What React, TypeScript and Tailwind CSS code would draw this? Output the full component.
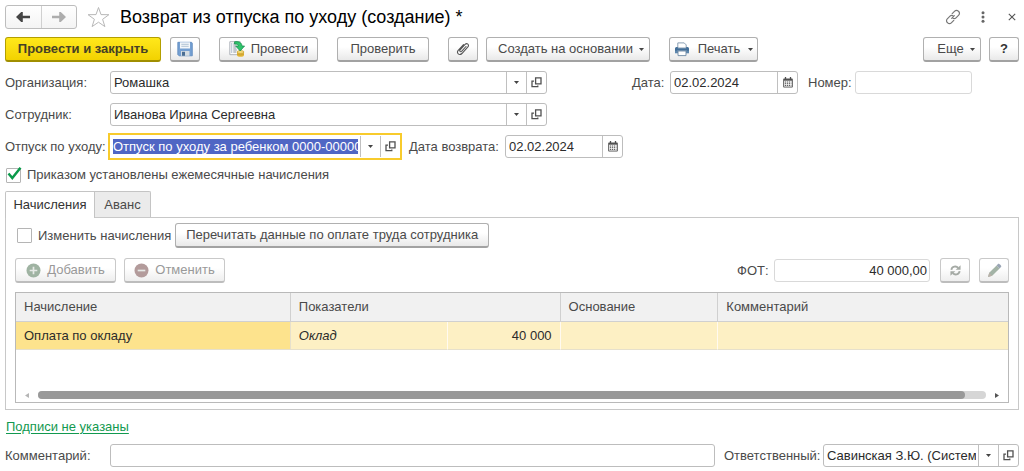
import { useState } from "react";
import type { ReactNode } from "react";

const buttonBase =
  "flex h-[25px] shrink-0 items-center justify-center rounded-[3px] border border-[#b0b0b0] border-b-2 border-b-[#a2a2a2] bg-linear-to-b from-white from-40% to-[#e9e9e9] whitespace-nowrap";

const disabledBase =
  "flex h-[25px] shrink-0 items-center justify-center rounded-[3px] border border-[#c9c9c9] border-b-2 border-b-[#bdbdbd] bg-linear-to-b from-white from-40% to-[#eeeeee] text-[#999] whitespace-nowrap";

const inputBase = "min-w-0 flex-1 bg-transparent text-[#2b2b2b] outline-none";

function Caret() {
  return (
    <svg width="5" height="3" viewBox="0 0 5 3" className="shrink-0" aria-hidden="true">
      <path d="M0 0h5L2.500 3z" fill="#444" />
    </svg>
  );
}

function OpenIcon() {
  return (
    <svg width="11" height="11" viewBox="0 0 11 11" fill="none" stroke="#505050" strokeWidth="1.3" aria-hidden="true">
      <path d="M4.600 .9h5.400v5.900H4.600z" />
      <path d="M3 4.200H1v5.500h5.800V8.400" />
    </svg>
  );
}

function CalendarIcon() {
  return (
    <svg width="10" height="11" viewBox="0 0 10 11" aria-hidden="true">
      <path d="M1 1.500h8a.8.8 0 0 1 .8.8v7.400a.8.8 0 0 1-.8.8H1a.8.8 0 0 1-.8-.8V2.300A.8.8 0 0 1 1 1.500z" fill="#505050" />
      <path d="M2.500 0v2M7.500 0v2" stroke="#505050" strokeWidth="1.300" />
      <path d="M1.100 3.700h7.800v5.900H1.100z" fill="#fff" />
      <path d="M1.800 5h6.600M1.800 6.700h6.600M1.800 8.400h6.600" stroke="#505050" strokeWidth="1" strokeDasharray="1.300 .7" />
    </svg>
  );
}

function SaveIcon() {
  return (
    <svg width="16" height="16" viewBox="0 0 16 16" aria-hidden="true">
      <path d="M.8 1.300h13.700l.8.8v12.700H2L.8 13.600z" fill="#75a0d2" stroke="#5a88bd" strokeWidth=".8" />
      <path d="M3 1.300h10v6.200H3z" fill="#f4f7fa" />
      <path d="M4.300 3.300h7.400M4.300 5.300h7.400" stroke="#a9bccf" strokeWidth=".9" />
      <path d="M4 10h8.500v4.800H4z" fill="#d5dde3" />
      <path d="M5 10.800h3v4H5z" fill="#4a6e94" />
    </svg>
  );
}

function PostIcon() {
  return (
    <svg width="16" height="16" viewBox="0 0 16 16" aria-hidden="true">
      <path d="M.8.7h10.400v13H.8z" fill="#fafafa" stroke="#a7adb3" strokeWidth=".9" />
      <path d="M4.300 3h3M4.300 5h3M4.300 7h3M4.300 9h3.500M4.300 11h3" stroke="#7e8b99" strokeWidth=".9" />
      <path d="M2.200 3h1M2.200 5h1M2.200 7h1M2.200 9h1M2.200 11h1" stroke="#5f7fa4" strokeWidth=".9" />
      <path d="M8 11v3.300c0 2 7 2 7 0V11z" fill="#e5b93a" />
      <ellipse cx="11.500" cy="11" rx="3.500" ry="1.400" fill="#f8df7f" stroke="#bd942a" strokeWidth=".6" />
      <path d="M8 12.900c1 1.400 6 1.400 7 0" fill="none" stroke="#bd942a" strokeWidth=".7" />
      <path d="M5.500.8c4-.8 7.400.8 7.500 4.200h2.600l-4.400 5L6.700 5h2.700c0-1.500-1.700-2.300-3.900-2z" fill="#2fc36b" stroke="#14884a" strokeWidth=".7" />
    </svg>
  );
}

function ClipIcon() {
  return (
    <svg width="14" height="14" viewBox="0 0 14 14" fill="none" stroke="#555" strokeWidth="1.100" strokeLinecap="round" aria-hidden="true">
      <path d="M10 4.500 5.600 9.300c-1 1-2.500-.2-1.500-1.400l5-5.500c1.800-1.800 4.600.4 2.800 2.500l-6 6.600c-2.500 2.400-6-.5-3.700-3.200L7.500 2.700" />
    </svg>
  );
}

function PrinterIcon() {
  return (
    <svg width="16" height="15" viewBox="0 0 16 15" aria-hidden="true">
      <path d="M3.800 .9h6.400l2 2V6H3.800z" fill="#fff" stroke="#7e95ab" strokeWidth=".9" />
      <path d="M2.500 5h1.300v1.300h8.400V5h1.300a1.500 1.500 0 0 1 1.500 1.500V11h-2.300V8.700H3.300V11H1V6.500A1.500 1.500 0 0 1 2.500 5z" fill="#426e98" />
      <path d="M1 8.700h14v2.600H1z" fill="#5d87ad" />
      <path d="M4 9h8v4.600H4z" fill="#fff" stroke="#6d89a3" strokeWidth=".9" />
    </svg>
  );
}

function LinkIcon() {
  return (
    <svg width="16" height="16" viewBox="0 0 16 16" fill="none" stroke="#777" strokeWidth="1.200" strokeLinecap="round" aria-hidden="true">
      <path d="M7.200 4.600 9.700 2.100a2.500 2.500 0 0 1 3.600 0l.4.400a2.500 2.500 0 0 1 0 3.600L11 8.800a2.500 2.500 0 0 1-3 .4" />
      <path d="M8.800 11.400l-2.500 2.500a2.500 2.500 0 0 1-3.600 0l-.4-.4a2.500 2.500 0 0 1 0-3.600L5 7.200a2.500 2.500 0 0 1 3-.4" />
      <path d="M6.700 9.300l2.600-2.600" />
    </svg>
  );
}

function ArrowIcon({ back = false }: { back?: boolean }) {
  return (
    <svg width="14" height="10" viewBox="0 0 14 10" fill={back ? "#454545" : "#adadad"} aria-hidden="true">
      <path d={back ? "M0 5 5.200 0h1.600v3.800H14v2.400H6.800V10H5.200z" : "M14 5 8.800 0H7.200v3.800H0v2.400h7.200V10h1.600z"} />
    </svg>
  );
}

function RoundIcon({ minus = false }: { minus?: boolean }) {
  return (
    <svg width="15" height="15" viewBox="0 0 15 15" aria-hidden="true">
      <circle cx="7.500" cy="7.500" r="7" fill={minus ? "#b39b9b" : "#9fb3a2"} />
      <path d={minus ? "M3.700 7.500h7.600" : "M3.700 7.500h7.600M7.500 3.700v7.600"} stroke="#e6e9e6" strokeWidth="1.700" />
    </svg>
  );
}

function RefreshIcon() {
  return (
    <svg width="11" height="11" viewBox="0 0 12 12" fill="none" stroke="#a5aaa5" strokeWidth="2" aria-hidden="true">
      <path d="M1.500 5.200C2 1.400 6.800.6 8.900 3.200" />
      <path d="M10.500 6.800C10 10.600 5.200 11.400 3.100 8.800" />
      <path d="M11.500.3v5H6.200z" fill="#a5aaa5" stroke="none" />
      <path d="M.5 11.700v-5h5.300z" fill="#a5aaa5" stroke="none" />
    </svg>
  );
}

function PencilIcon() {
  return (
    <svg width="15" height="15" viewBox="0 0 15 15" aria-hidden="true">
      <path d="M1 14l1.200-4.200L9.600 2.400l3 3-7.400 7.400z" fill="#a3b3a6" />
      <path d="M9.600 2.400 11.200.8c.8-.8 3.800 2.200 3 3l-1.600 1.600z" fill="#9aa5b5" />
      <path d="M1 14l1.200-4.200 3 3z" fill="#b9b0a8" />
    </svg>
  );
}

function SideButton({ label, children }: { label: string; children: ReactNode }) {
  return (
    <button type="button" aria-label={label} className="flex w-5 shrink-0 items-center justify-center self-stretch border-l border-[#c0c0c0]">
      {children}
    </button>
  );
}

type FieldProps = { id: string; value: string; kind: "pick" | "date"; className: string };

function Field({ id, value, kind, className }: FieldProps) {
  return (
    <div className={`flex h-[23px] items-center rounded-[3px] border border-[#bdbdbd] bg-white pl-[3px] ${className}`}>
      <input id={id} type="text" defaultValue={value} className={inputBase} />
      {kind === "pick" ? (
        <>
          <span className="w-[2px] shrink-0" />
          <SideButton label="Выбрать"><Caret /></SideButton>
          <SideButton label="Открыть"><OpenIcon /></SideButton>
        </>
      ) : (
        <SideButton label="Календарь"><CalendarIcon /></SideButton>
      )}
    </div>
  );
}

type CheckProps = { id: string; label: string; initial: boolean };

function Check({ id, label, initial }: CheckProps) {
  const [on, setOn] = useState(initial);
  return (
    <div className="flex items-center gap-[6px]">
      <span className="relative flex">
        <input
          id={id}
          type="checkbox"
          checked={on}
          onChange={(e) => setOn(e.target.checked)}
          className="size-[15px] appearance-none rounded-[1px] border border-[#b5b5b5] bg-white"
        />
        {on && (
          <svg className="pointer-events-none absolute -top-px left-px" width="15" height="14" viewBox="0 0 15 14" fill="none" aria-hidden="true">
            <path d="M1.500 6.500 5.300 11 13.500.8" stroke="#0a9a4a" strokeWidth="2.500" />
          </svg>
        )}
      </span>
      <label htmlFor={id} className="whitespace-nowrap">{label}</label>
    </div>
  );
}

export default function App() {
  return (
    <main className="bg-white px-[5px] pt-[5px] pb-1 font-['Liberation_Sans',Arial,sans-serif] text-[13px] leading-4 text-[#4a4a4a]">
      <header className="flex h-6 items-center">
        <div className="flex h-6 w-[72px] rounded-[3px] border border-[#bdbdbd] bg-linear-to-b from-white to-[#f4f4f4]">
          <button type="button" aria-label="Назад" className="flex flex-1 items-center justify-center border-r border-[#d0d0d0]">
            <ArrowIcon back />
          </button>
          <button type="button" aria-label="Вперед" className="flex flex-1 items-center justify-center">
            <ArrowIcon />
          </button>
        </div>
        <button type="button" aria-label="В избранное" className="ml-[10px]">
          <svg width="23" height="22" viewBox="0 0 23 22" fill="none" stroke="#b8b8b8" strokeWidth="1" aria-hidden="true">
            <path d="M11.500 1.500 14 8.600l7.900.1-6.300 4.600 2.300 7.300-6.400-4.400-6.400 4.400 2.300-7.300L1.100 8.700 9 8.600z" />
          </svg>
        </button>
        <h1 className="ml-[10px] text-[18px] leading-6 text-black">Возврат из отпуска по уходу (создание) *</h1>
        <div className="ml-auto flex items-center pr-[3px]">
          <button type="button" aria-label="Ссылка"><LinkIcon /></button>
          <button type="button" aria-label="Меню" className="ml-5">
            <svg width="4" height="12" viewBox="0 0 4 12" fill="#666" aria-hidden="true">
              <circle cx="2" cy="1.700" r="1.500" /><circle cx="2" cy="6" r="1.500" /><circle cx="2" cy="10.300" r="1.500" />
            </svg>
          </button>
          <button type="button" aria-label="Закрыть" className="ml-[23px]">
            <svg width="8" height="8" viewBox="0 0 8 8" stroke="#555" strokeWidth="1.100" aria-hidden="true"><path d="M.8.800l6.400 6.400M7.200.800.8 7.200" /></svg>
          </button>
        </div>
      </header>

      <div className="mt-2 flex items-center">
        <button type="button" className="flex h-[25px] w-[156px] items-center justify-center rounded-[3px] border border-[#b39f00] border-b-2 border-b-[#a08e00] bg-linear-to-b from-[#ffe81a] to-[#f2d200] font-bold whitespace-nowrap text-[#454025]">
          Провести и закрыть
        </button>
        <button type="button" aria-label="Записать" className={`${buttonBase} ml-[9px] w-[30px]`}><SaveIcon /></button>
        <button type="button" className={`${buttonBase} ml-[19px] w-[99px] gap-[6px]`}><PostIcon />Провести</button>
        <button type="button" className={`${buttonBase} ml-[19px] w-[92px]`}>Проверить</button>
        <button type="button" aria-label="Присоединенные файлы" className={`${buttonBase} ml-[19px] w-[30px]`}><ClipIcon /></button>
        <button type="button" className={`${buttonBase} ml-2 w-[164px] gap-[6px] pl-[6px]`}>Создать на основании<Caret /></button>
        <button type="button" className={`${buttonBase} ml-[19px] w-[89px] gap-2`}><PrinterIcon />Печать<Caret /></button>
        <button type="button" className={`${buttonBase} ml-auto w-[58px] gap-[6px] pl-2`}>Еще<Caret /></button>
        <button type="button" className={`${buttonBase} ml-2 w-[30px] font-bold text-[#333]`}>?</button>
      </div>

      <div className="mt-[9px] flex items-center">
        <label htmlFor="org" className="w-[105px] shrink-0">Организация:</label>
        <Field id="org" kind="pick" value="Ромашка" className="w-[437px]" />
        <label htmlFor="date" className="ml-[85px] w-[38px]">Дата:</label>
        <Field id="date" kind="date" value="02.02.2024" className="w-[128px]" />
        <label htmlFor="number" className="ml-[10px] w-[47px]">Номер:</label>
        <input id="number" type="text" readOnly className="h-[23px] w-[117px] rounded-[3px] border border-[#d9d9d9] px-1 outline-none" />
      </div>

      <div className="mt-[9px] flex items-center">
        <label htmlFor="employee" className="w-[105px] shrink-0">Сотрудник:</label>
        <Field id="employee" kind="pick" value="Иванова Ирина Сергеевна" className="w-[437px]" />
      </div>

      <div className="mt-[7px] flex items-center">
        <label htmlFor="leave" className="w-[103px] shrink-0 whitespace-nowrap">Отпуск по уходу:</label>
        <div className="flex h-[27px] w-[294px] items-center border-2 border-[#f8cb2c] bg-white py-px pl-[3px]">
          <input id="leave" type="text" defaultValue="Отпуск по уходу за ребенком 0000-000001" className="h-[15px] min-w-0 flex-1 bg-[#4f66c4] text-white outline-none" />
          <span className="w-[2px] shrink-0" />
          <SideButton label="Выбрать"><Caret /></SideButton>
          <SideButton label="Открыть"><OpenIcon /></SideButton>
        </div>
        <label htmlFor="return" className="ml-[7px] w-24 whitespace-nowrap">Дата возврата:</label>
        <Field id="return" kind="date" value="02.02.2024" className="w-[118px]" />
      </div>

      <div className="mt-[7px] pl-px">
        <Check id="order" label="Приказом установлены ежемесячные начисления" initial />
      </div>

      <div role="tablist" className="mt-2 flex h-[26px]">
        <button type="button" role="tab" aria-selected="true" className="relative z-10 -mb-px w-[90px] rounded-tl-[2px] border border-b-0 border-[#c4c4c4] bg-white pb-px text-[#333]">Начисления</button>
        <button type="button" role="tab" aria-selected="false" className="w-14 rounded-tr-[2px] border border-b-0 border-l-0 border-[#c4c4c4] bg-[#ebebeb]">Аванс</button>
      </div>

      <section className="border border-[#c8c8c8] px-[9px] pt-[5px] pb-[6px]">
        <div className="flex items-center gap-1 pl-[2px]">
          <Check id="edit" label="Изменить начисления" initial={false} />
          <button type="button" className={`${buttonBase} w-[314px]`}>Перечитать данные по оплате труда сотрудника</button>
        </div>

        <div className="mt-[10px] flex items-center">
          <button type="button" disabled className={`${disabledBase} w-[101px] gap-[6px]`}><RoundIcon />Добавить</button>
          <button type="button" disabled className={`${disabledBase} ml-2 w-[101px] gap-[6px]`}><RoundIcon minus />Отменить</button>
          <label htmlFor="fund" className="ml-auto w-[37px]">ФОТ:</label>
          <input id="fund" type="text" readOnly value="40 000,00" className="h-[23px] w-[156px] rounded-[3px] border border-[#d9d9d9] px-[2px] text-right text-[#2b2b2b] outline-none" />
          <button type="button" disabled aria-label="Обновить" className={`${disabledBase} ml-[10px] w-[30px]`}><RefreshIcon /></button>
          <button type="button" disabled aria-label="Изменить" className={`${disabledBase} ml-[9px] w-[30px]`}><PencilIcon /></button>
        </div>

        <div className="mt-[9px] border border-[#b9b9b9]">
          <table className="w-full table-fixed border-separate border-spacing-0 text-left">
            <colgroup>
              <col className="w-[27.700%]" />
              <col className="w-[15.800%]" />
              <col className="w-[11.400%]" />
              <col className="w-[15.900%]" />
              <col />
            </colgroup>
            <thead>
              <tr className="h-[29px] bg-[#f1f1f1]">
                <th className="border-r border-b border-[#d0d0d0] px-2 font-normal">Начисление</th>
                <th colSpan={2} className="border-r border-b border-[#d0d0d0] px-2 font-normal">Показатели</th>
                <th className="border-r border-b border-[#d0d0d0] px-2 font-normal">Основание</th>
                <th className="border-b border-[#d0d0d0] px-2 font-normal">Комментарий</th>
              </tr>
            </thead>
            <tbody>
              <tr className="h-7 bg-[#fdf0c4] text-[#2b2b2b]">
                <td className="border-r border-b border-[#e6e0cc] bg-[#fde38d] px-2">Оплата по окладу</td>
                <td className="border-r border-b border-[#fffaf0] border-b-[#e6e0cc] px-2 italic">Оклад</td>
                <td className="border-r border-b border-[#fffaf0] border-b-[#e6e0cc] px-2 text-right">40 000</td>
                <td className="border-r border-b border-[#fffaf0] border-b-[#e6e0cc]" />
                <td className="border-b border-[#e6e0cc]" />
              </tr>
            </tbody>
          </table>
          <div className="mt-[41px] mb-[3px] flex h-2 items-center pr-[9px] pl-[9px]">
            <svg width="4" height="5" viewBox="0 0 4 5" aria-hidden="true"><path d="M4 0v5L0 2.500z" fill="#b5b5b5" /></svg>
            <div className="mx-[9px] h-2 flex-1 rounded-full bg-[#d6d6d6]">
              <div className="h-2 w-[97.800%] rounded-full bg-[#999]" />
            </div>
            <svg width="4" height="5" viewBox="0 0 4 5" aria-hidden="true"><path d="M0 0v5L4 2.500z" fill="#555" /></svg>
          </div>
        </div>
      </section>

      <div className="mt-[9px] flex pl-px">
        <a href="#signatures" className="text-[#12994f] underline underline-offset-2">Подписи не указаны</a>
      </div>

      <div className="mt-[9px] flex items-center">
        <label htmlFor="comment" className="w-[105px] shrink-0">Комментарий:</label>
        <input id="comment" type="text" className="h-[23px] min-w-0 flex-1 rounded-[3px] border border-[#bdbdbd] px-1 outline-none" />
        <label htmlFor="responsible" className="ml-[9px] w-[99px] whitespace-nowrap">Ответственный:</label>
        <Field id="responsible" kind="pick" value="Савинская З.Ю. (Системный программист)" className="w-[196px]" />
      </div>
    </main>
  );
}
